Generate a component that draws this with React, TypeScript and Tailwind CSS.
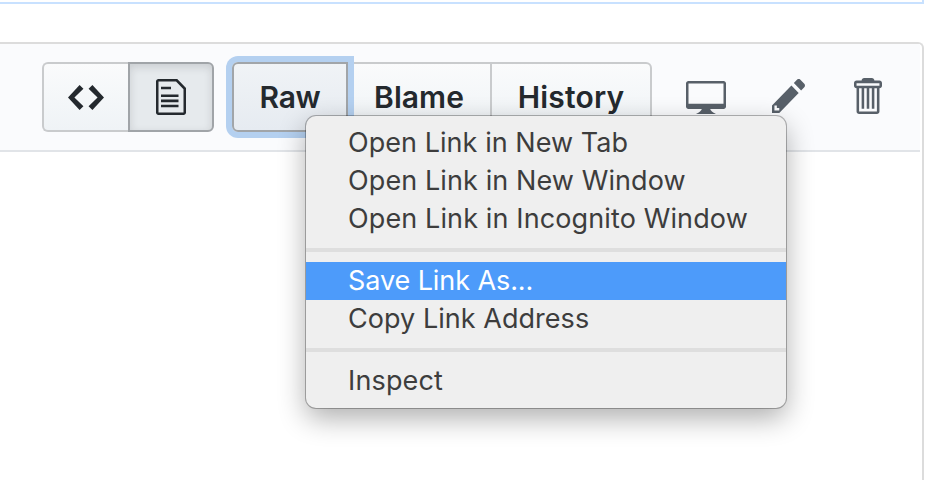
import type { ReactNode } from "react";

const FONT = "font-['Inter','Liberation_Sans',sans-serif]";

function Icon({ d, viewBox, className }: { d: string; viewBox: string; className: string }) {
  return (
    <svg viewBox={viewBox} preserveAspectRatio="none" className={`shrink-0 fill-current ${className}`} aria-hidden="true">
      <path fillRule="evenodd" d={d} />
    </svg>
  );
}

function MenuItem({ children, className = "", active = false }: { children: ReactNode; className?: string; active?: boolean }) {
  return (
    <div
      role="menuitem"
      className={`flex h-[38px] items-center pl-[42px] text-[27px] whitespace-nowrap ${
        active ? "bg-[#4d9bfa] text-white" : "text-[#3d3d3d]"
      } ${className}`}
    >
      {children}
    </div>
  );
}

function Separator() {
  return <div className="my-[10px] h-1 bg-[#dedede]" />;
}

const BUTTON = "flex h-full items-center justify-center bg-linear-to-b from-[#fafbfc] to-[#eff3f6]";

export default function App() {
  return (
    <div className={`relative h-[480px] w-[946px] overflow-hidden bg-white ${FONT}`}>
      <div className="h-1 w-[924px] border-r-2 border-b-2 border-[#c8e1ff] bg-white" />

      <section className="mt-[38px] h-[438px] w-[924px] rounded-tr-[6px] border-t-2 border-r-2 border-[#dcdcdc] bg-white">
        <header className="flex h-[108px] w-[920px] items-start border-b-2 border-[#e1e4e8] bg-[#fafbfd] pt-[18px] pl-[42px] text-[#24292e]">
          <div className="flex h-[70px] w-[172px]">
            <button className={`${BUTTON} w-[86px] rounded-l-[6px] border-2 border-r-0 border-[#c9cbcd]`}>
              <Icon className="h-[25px] w-[36px]" viewBox="0 3 14 10" d="M9.5 3L8 4.5 11.5 8 8 11.5 9.5 13 14 8 9.5 3zm-5 0L0 8l4.5 5L6 11.5 2.5 8 6 4.5 4.5 3z" />
            </button>
            <button className="flex h-full w-[86px] items-center justify-center rounded-r-[6px] border-2 border-[#a0a4a8] bg-[#e6eaed] shadow-[inset_0_3px_8px_rgba(27,31,35,0.14)]">
              <Icon className="h-[36px] w-[30px]" viewBox="0 1 12 14" d="M6 5H2V4h4v1zM2 8h7V7H2v1zm0 2h7V9H2v1zm0 2h7v-1H2v1zm10-7.5V14c0 .55-.45 1-1 1H1c-.55 0-1-.45-1-1V2c0-.55.45-1 1-1h7.5L12 4.5zM11 5L8 2H1v12h10V5z" />
            </button>
          </div>

          <div className="ml-[18px] flex h-[70px] w-[420px] text-[30px] font-semibold">
            <button className="z-10 flex h-full w-[116px] items-center justify-center rounded-l-[6px] border-2 border-[#a1a5a9] bg-linear-to-b from-[#f0f3f6] to-[#e6ebf1] shadow-[0_0_0_6px_#b4d0f0]">
              <span className="tracking-[-0.3px]">Raw</span>
            </button>
            <button className={`${BUTTON} w-[144px] border-y-2 border-r-2 border-[#c9cbcd]`}>
              <span className="tracking-[0.05px]">Blame</span>
            </button>
            <button className={`${BUTTON} w-[160px] rounded-r-[6px] border-2 border-l-0 border-[#c9cbcd]`}>
              <span className="tracking-[0.2px]">History</span>
            </button>
          </div>

          <div className="flex items-start pl-[34px] text-[#586069]">
            <Icon className="mt-[19px] h-[33px] w-[40px]" viewBox="0 2 16 13" d="M15 2H1c-.55 0-1 .45-1 1v9c0 .55.45 1 1 1h5.34c-.25.61-.86 1.39-2.34 2h8c-1.48-.61-2.09-1.39-2.34-2H15c.55 0 1-.45 1-1V3c0-.55-.45-1-1-1zm0 9H1V3h14v8z" />
            <Icon className="mt-[17px] ml-[46px] h-[34px] w-[33px]" viewBox="0 1.4 13.6 13.6" d="M0 12v3h3l8-8-3-3-8 8zm3 2H1v-2h1v1h1v1zm10.3-9.3L12 6 9 3l1.3-1.3a.996.996 0 0 1 1.41 0l1.59 1.59c.39.39.39 1.02 0 1.41z" />
            <Icon className="mt-[16px] ml-[49px] h-[36px] w-[28px]" viewBox="1 1 11 14" d="M11 2H9c0-.55-.45-1-1-1H5c-.55 0-1 .45-1 1H2c-.55 0-1 .45-1 1v1c0 .55.45 1 1 1v9c0 .55.45 1 1 1h7c.55 0 1-.45 1-1V5c.55 0 1-.45 1-1V3c0-.55-.45-1-1-1zm-1 12H3V5h1v8h1V5h1v8h1V5h1v8h1V5h1v9zm1-10H2V3h9v1z" />
          </div>
        </header>
      </section>

      <div
        role="menu"
        className="absolute top-[116px] left-[306px] z-20 w-[480px] rounded-[10px] bg-[#efefef] py-2 shadow-[0_0_0_1px_rgba(0,0,0,0.28),0_10px_28px_rgba(0,0,0,0.32)]"
      >
        <MenuItem className="tracking-[0.05px]">Open Link in New Tab</MenuItem>
        <MenuItem className="tracking-[0.1px]">Open Link in New Window</MenuItem>
        <MenuItem className="tracking-[0.12px]">Open Link in Incognito Window</MenuItem>
        <Separator />
        <MenuItem active className="tracking-[-0.08px]">Save Link As...</MenuItem>
        <MenuItem className="tracking-[0.04px]">Copy Link Address</MenuItem>
        <Separator />
        <MenuItem className="tracking-[0.15px]">Inspect</MenuItem>
      </div>
    </div>
  );
}
